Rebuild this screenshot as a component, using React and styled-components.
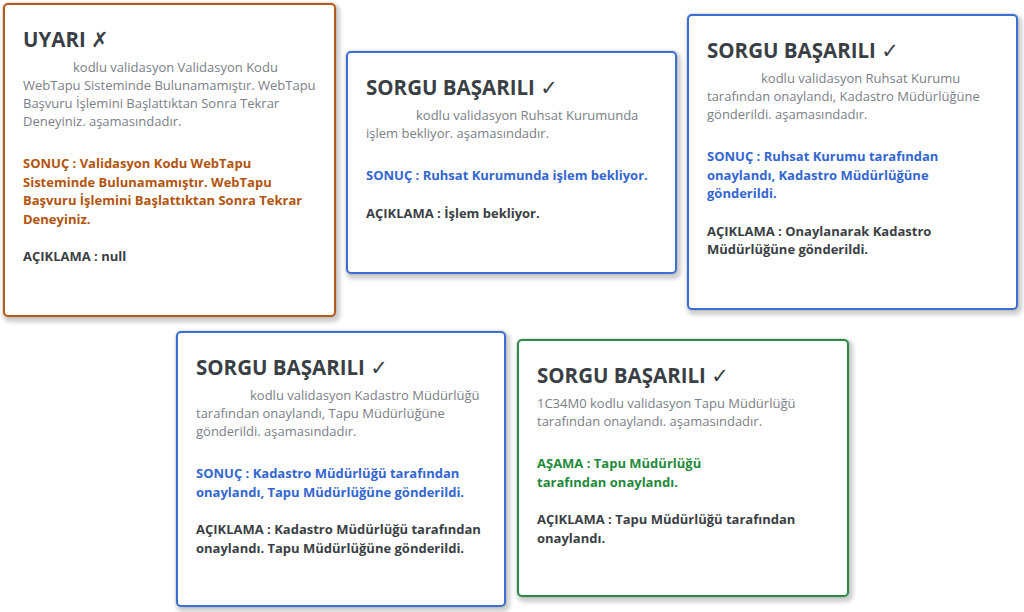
import React from "react";
import styled, { createGlobalStyle } from "styled-components";

const Global = createGlobalStyle`
  html, body { margin: 0; padding: 0; background: #ffffff; }
  body { font-family: "Open Sans", "Noto Sans", sans-serif; }
  * { box-sizing: border-box; }
`;

const tones = {
  warn: { border: "#b65a1c", text: "#b3540f" },
  info: { border: "#3b6fd4", text: "#3366d1" },
  ok: { border: "#2e8b47", text: "#1f8a3b" },
};

const Page = styled.div`
  width: 1024px;
  height: 612px;
  overflow: hidden;
  display: flex;
  flex-direction: column;
  gap: 14px;
  padding-top: 3px;
`;

const Row = styled.div`
  display: flex;
  align-items: flex-start;
  gap: ${(p) => p.$gap}px;
  padding-left: ${(p) => p.$left}px;
`;

const Card = styled.section`
  flex: none;
  width: ${(p) => p.$w}px;
  height: ${(p) => p.$h}px;
  margin-top: ${(p) => p.$dy || 0}px;
  background: #ffffff;
  border: 2px solid ${(p) => tones[p.$tone].border};
  border-radius: 5px;
  box-shadow: 0 0 0 1px rgba(0, 0, 0, 0.06), 2px 3px 4px 2px rgba(0, 0, 0, 0.2);
  padding: 20px ${(p) => p.$pr || 14}px 0 18px;
`;

const Title = styled.h2`
  margin: 0 0 4px;
  font-size: 20.5px;
  line-height: 28px;
  font-weight: 700;
  color: #3a3f45;
  white-space: nowrap;
`;

const Mark = styled.span`
  font-family: "DejaVu Sans", sans-serif;
  font-weight: 400;
  font-size: 21px;
  color: #3a3f45;
`;

const Lead = styled.p`
  margin: 0 0 24px;
  font-size: 13px;
  line-height: 18px;
  color: #7a8087;
`;

const Blank = styled.span`
  display: inline-block;
  width: ${(p) => p.$w}px;
`;

const Field = styled.p`
  margin: 0 0 19px;
  font-size: 13px;
  line-height: 18.5px;
  font-weight: 700;
  color: ${(p) => (p.$tone ? tones[p.$tone].text : "#3a3f45")};
`;

export default function App() {
  return (
    <>
      <Global />
      <Page>
        <Row $left={3} $gap={10}>
          <Card $tone="warn" $w={333} $h={314}>
            <Title>
              UYARI <Mark>✗</Mark>
            </Title>
            <Lead>
              <Blank $w={50} />
              kodlu validasyon Validasyon Kodu WebTapu Sisteminde
              Bulunamamıştır. WebTapu Başvuru İşlemini Başlattıktan Sonra
              Tekrar Deneyiniz. aşamasındadır.
            </Lead>
            <Field $tone="warn">
              SONUÇ : Validasyon Kodu WebTapu Sisteminde Bulunamamıştır.
              WebTapu Başvuru İşlemini Başlattıktan Sonra Tekrar Deneyiniz.
            </Field>
            <Field>AÇIKLAMA : null</Field>
          </Card>
          <Card $tone="info" $w={331} $h={223} $dy={48}>
            <Title>
              SORGU BAŞARILI <Mark>✓</Mark>
            </Title>
            <Lead>
              <Blank $w={50} />
              kodlu validasyon Ruhsat Kurumunda işlem bekliyor.
              aşamasındadır.
            </Lead>
            <Field $tone="info">SONUÇ : Ruhsat Kurumunda işlem bekliyor.</Field>
            <Field>AÇIKLAMA : İşlem bekliyor.</Field>
          </Card>
          <Card $tone="info" $w={331} $h={296} $dy={11} $pr={22}>
            <Title>
              SORGU BAŞARILI <Mark>✓</Mark>
            </Title>
            <Lead>
              <Blank $w={54} />
              kodlu validasyon Ruhsat Kurumu tarafından onaylandı, Kadastro
              Müdürlüğüne gönderildi. aşamasındadır.
            </Lead>
            <Field $tone="info">
              SONUÇ : Ruhsat Kurumu tarafından onaylandı, Kadastro
              Müdürlüğüne gönderildi.
            </Field>
            <Field>AÇIKLAMA : Onaylanarak Kadastro Müdürlüğüne gönderildi.</Field>
          </Card>
        </Row>
        <Row $left={176} $gap={11}>
          <Card $tone="info" $w={330} $h={276}>
            <Title>
              SORGU BAŞARILI <Mark>✓</Mark>
            </Title>
            <Lead>
              <Blank $w={54} />
              kodlu validasyon Kadastro Müdürlüğü tarafından onaylandı, Tapu
              Müdürlüğüne gönderildi. aşamasındadır.
            </Lead>
            <Field $tone="info">
              SONUÇ : Kadastro Müdürlüğü tarafından onaylandı, Tapu
              Müdürlüğüne gönderildi.
            </Field>
            <Field>
              AÇIKLAMA : Kadastro Müdürlüğü tarafından onaylandı. Tapu
              Müdürlüğüne gönderildi.
            </Field>
          </Card>
          <Card $tone="ok" $w={332} $h={258} $dy={8}>
            <Title>
              SORGU BAŞARILI <Mark>✓</Mark>
            </Title>
            <Lead>
              1C34M0 kodlu validasyon Tapu Müdürlüğü tarafından onaylandı.
              aşamasındadır.
            </Lead>
            <Field $tone="ok">
              AŞAMA : Tapu Müdürlüğü
              <br />
              tarafından onaylandı.
            </Field>
            <Field>AÇIKLAMA : Tapu Müdürlüğü tarafından onaylandı.</Field>
          </Card>
        </Row>
      </Page>
    </>
  );
}
